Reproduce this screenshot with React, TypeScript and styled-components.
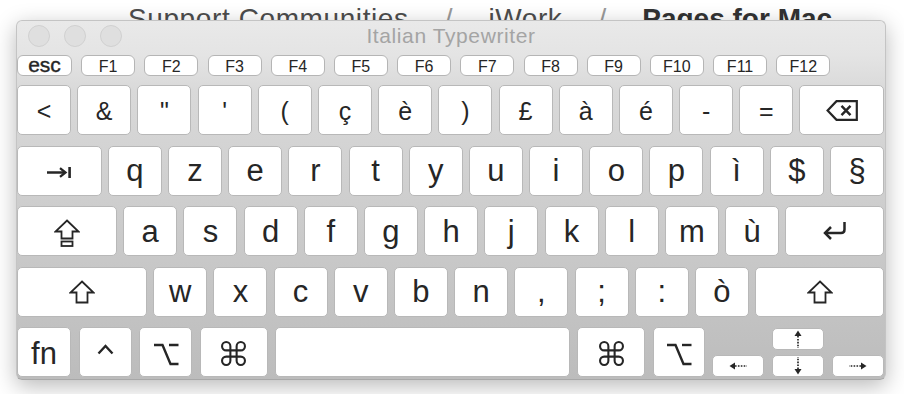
import React from "react";
import styled, { createGlobalStyle } from "styled-components";

const ink = "#262626";

const row1 = ["<", "&", "\"", "'", "(", "ç", "è", ")", "£", "à", "é", "-", "="];
const row2 = ["q", "z", "e", "r", "t", "y", "u", "i", "o", "p", "ì", "$", "§"];
const row3 = ["a", "s", "d", "f", "g", "h", "j", "k", "l", "m", "ù"];
const row4 = ["w", "x", "c", "v", "b", "n", ",", ";", ":", "ò"];
const fkeys = ["F1", "F2", "F3", "F4", "F5", "F6", "F7", "F8", "F9", "F10", "F11", "F12"];

const TabIcon = () => (
    <svg width="26" height="13" viewBox="0 0 26 13">
        <path d="M1 6.5H18.5" stroke={ink} strokeWidth="2.3" />
        <path d="M14 2.2L19.5 6.5L14 10.8" fill="none" stroke={ink} strokeWidth="2.3" />
        <rect x="22.3" y="1" width="2.6" height="11" fill={ink} />
    </svg>
);

const CapsIcon = () => (
    <svg width="26" height="28" viewBox="0 0 26 28">
        <path d="M13 1.5L24.5 12.5H18.5V19.5H7.5V12.5H1.5Z" fill="none" stroke={ink} strokeWidth="1.8" />
        <rect x="7.5" y="22.5" width="11" height="4.5" fill="none" stroke={ink} strokeWidth="1.8" />
    </svg>
);

const ShiftIcon = () => (
    <svg width="26" height="24" viewBox="0 0 26 24">
        <path d="M13 1.5L24.5 12.5H18.5V22.5H7.5V12.5H1.5Z" fill="none" stroke={ink} strokeWidth="1.8" />
    </svg>
);

const ReturnIcon = () => (
    <svg width="27" height="19" viewBox="0 0 27 19">
        <path d="M23.5 1V8.5Q23.5 12 20 12H4.5" fill="none" stroke={ink} strokeWidth="2.5" />
        <path d="M10 6L4 12L10 18" fill="none" stroke={ink} strokeWidth="2.5" />
    </svg>
);

const DeleteIcon = () => (
    <svg width="32" height="21" viewBox="0 0 32 21">
        <path d="M10.5 1.2H30.8V19.8H10.5L1.6 10.5Z" fill="none" stroke={ink} strokeWidth="2.2" />
        <path d="M15.5 5.8L24.5 15.2M24.5 5.8L15.5 15.2" stroke={ink} strokeWidth="2.4" />
    </svg>
);

const CtrlIcon = () => (
    <svg width="17" height="11" viewBox="0 0 17 11">
        <path d="M1.5 9.5L8.5 2L15.5 9.5" fill="none" stroke={ink} strokeWidth="2.4" />
    </svg>
);

const OptionIcon = () => (
    <svg width="26" height="23" viewBox="0 0 26 23">
        <path d="M1 2H9.5L17.5 21H25.5" fill="none" stroke={ink} strokeWidth="2.4" />
        <path d="M16 2H25.5" stroke={ink} strokeWidth="2.4" />
    </svg>
);

const CmdIcon = () => (
    <svg width="25" height="25" viewBox="0 0 24 24">
        <path
            d="M15 5V19A4 4 0 1 0 19 15H5A4 4 0 1 0 9 19V5A4 4 0 1 0 5 9H19A4 4 0 1 0 15 5"
            fill="none"
            stroke={ink}
            strokeWidth="2"
        />
    </svg>
);

const DashArrow = ({ dir }: { dir: "up" | "down" | "left" | "right" }) => {
    const rot = { up: 0, right: 90, down: 180, left: 270 }[dir];
    return (
        <svg width="18" height="18" viewBox="0 0 18 18" style={{ transform: `rotate(${rot}deg)` }}>
            <path d="M9 0.5L12.5 6H5.5Z" fill={ink} />
            <path d="M9 6V18" stroke={ink} strokeWidth="1.7" strokeDasharray="1.6 1.3" />
        </svg>
    );
};

const App = () => {
    return (
        <>
            <GlobalStyle />
            <Page>
                <Crumbs>
                    <Crumb>Support Communities</Crumb>
                    <Sep>/</Sep>
                    <Crumb>iWork</Crumb>
                    <Sep>/</Sep>
                    <Crumb $bold>Pages for Mac</Crumb>
                </Crumbs>

                <Window>
                    <TitleBar>
                        <Lights>
                            <Light />
                            <Light />
                            <Light />
                        </Lights>
                        <Title>Italian Typewriter</Title>
                        <div />
                    </TitleBar>

                    <Keyboard>
                        <FnRow>
                            <FnKey $w={55} $esc>esc</FnKey>
                            {fkeys.map((f) => (
                                <FnKey key={f} $w={54}>{f}</FnKey>
                            ))}
                        </FnRow>

                        <Row $gap={6.2}>
                            {row1.map((c) => (
                                <Key key={c} $w={54} $size={25} $nudge={1.5}>{c}</Key>
                            ))}
                            <Key><DeleteIcon /></Key>
                        </Row>

                        <Row $gap={6.2}>
                            <Key $nudge={2}><TabIcon /></Key>
                            {row2.map((c) => (
                                <Key key={c} $w={54}>{c}</Key>
                            ))}
                        </Row>

                        <Row $gap={6.2}>
                            <Key $w={100} $nudge={2}><CapsIcon /></Key>
                            {row3.map((c) => (
                                <Key key={c} $w={54}>{c}</Key>
                            ))}
                            <Key $nudge={-0.5}><ReturnIcon /></Key>
                        </Row>

                        <Row $gap={6.2}>
                            <Key $w={130}><ShiftIcon /></Key>
                            {row4.map((c) => (
                                <Key key={c} $w={54}>{c}</Key>
                            ))}
                            <Key><ShiftIcon /></Key>
                        </Row>

                        <Row $gap={7.5}>
                            <Key $w={54} $nudge={1.5}>fn</Key>
                            <Key $w={53} $nudge={-3}><CtrlIcon /></Key>
                            <Key $w={53} $nudge={2}><OptionIcon /></Key>
                            <Key $w={68} $nudge={1}><CmdIcon /></Key>
                            <Key />
                            <Key $w={68} $nudge={1}><CmdIcon /></Key>
                            <Key $w={52} $nudge={2}><OptionIcon /></Key>
                            <Arrows>
                                <ArrowKey $col={2} $row={1}><DashArrow dir="up" /></ArrowKey>
                                <ArrowKey $col={1} $row={2}><DashArrow dir="left" /></ArrowKey>
                                <ArrowKey $col={2} $row={2}><DashArrow dir="down" /></ArrowKey>
                                <ArrowKey $col={3} $row={2}><DashArrow dir="right" /></ArrowKey>
                            </Arrows>
                        </Row>
                    </Keyboard>
                </Window>
            </Page>
        </>
    );
};

export default App;

const GlobalStyle = createGlobalStyle`
html, body {
    margin: 0;
    padding: 0;
    background: #fff;
    overflow: hidden;
}
body {
    font-family: "Liberation Sans", "DejaVu Sans", Arial, sans-serif;
}
`;

const Page = styled.div`
position: relative;
width: 904px;
height: 394px;
`;

// only the top strip of the page header shows above the viewer window
const Crumbs = styled.div`
display: flex;
align-items: baseline;
height: 20px;
overflow: hidden;
padding: 3px 0 0 128px;
box-sizing: border-box;
font-size: 28px;
line-height: 32px;
white-space: nowrap;
`;

const Crumb = styled.span<{ $bold?: boolean }>`
font-weight: ${(p) => (p.$bold ? 700 : 400)};
color: ${(p) => (p.$bold ? "#333" : "#4d4d4d")};
letter-spacing: ${(p) => (p.$bold ? 0 : 0.6)}px;
`;

const Sep = styled.span`
color: #9a9a9a;
margin: 0 36px;
`;

const Window = styled.div`
position: absolute;
left: 16px;
top: 20px;
width: 870px;
height: 360px;
box-sizing: border-box;
border: 1px solid #c4c4c4;
border-bottom-color: #a8a8a8;
border-radius: 6px;
background: linear-gradient(to bottom, #e9e9e9 0px, #e4e4e4 34px, #d9d9d9 70px, #bcbcbc 100%);
box-shadow: 0 6px 22px rgba(0, 0, 0, 0.28);
display: flex;
flex-direction: column;
overflow: hidden;
`;

const TitleBar = styled.div`
height: 34px;
flex: 0 0 34px;
box-sizing: border-box;
padding-top: 4px;
display: grid;
grid-template-columns: 1fr auto 1fr;
align-items: start;
`;

const Lights = styled.div`
display: flex;
gap: 14px;
padding-left: 11px;
`;

const Light = styled.div`
width: 22px;
height: 22px;
box-sizing: border-box;
border-radius: 50%;
background: #dfdfdf;
border: 1px solid #d0d0d0;
`;

const Title = styled.div`
font-size: 21px;
line-height: 22px;
color: #a4a4a4;
letter-spacing: 0.6px;
`;

const Keyboard = styled.div`
display: flex;
flex-direction: column;
gap: 10.5px;
padding-right: 1px;
`;

const FnRow = styled.div`
display: flex;
gap: 9.2px;
height: 21px;
margin-bottom: -1.5px;
`;

const FnKey = styled.div<{ $w: number; $esc?: boolean }>`
flex: 0 0 ${(p) => p.$w}px;
box-sizing: border-box;
height: 100%;
display: flex;
align-items: center;
justify-content: center;
padding: ${(p) => (p.$esc ? "0 0 3px" : "3px 0 0")};
background: #fff;
border: 1px solid #b5b5b5;
border-radius: 6px;
color: ${ink};
font-size: ${(p) => (p.$esc ? 21 : 16)}px;
-webkit-text-stroke: ${(p) => (p.$esc ? 0.4 : 0)}px ${ink};
line-height: 1;
`;

const Row = styled.div<{ $gap: number }>`
display: flex;
gap: ${(p) => p.$gap}px;
height: 50px;
`;

const Key = styled.div<{ $w?: number; $size?: number; $nudge?: number }>`
flex: ${(p) => (p.$w ? `0 0 ${p.$w}px` : "1 1 0")};
box-sizing: border-box;
height: 100%;
display: flex;
align-items: center;
justify-content: center;
padding: ${(p) => {
    const n = p.$nudge ?? 0;
    return n >= 0 ? `${n * 2}px 0 0` : `0 0 ${-n * 2}px`;
}};
background: #fff;
border: 1px solid #b8b8b8;
border-radius: 5px;
color: ${ink};
font-size: ${(p) => p.$size ?? 31}px;
line-height: 1;
`;

const Arrows = styled.div`
flex: 0 0 172px;
align-self: flex-end;
display: grid;
grid-template-columns: repeat(3, 52px);
grid-template-rows: 22px 22px;
column-gap: 8px;
row-gap: 5px;
`;

const ArrowKey = styled.div<{ $col: number; $row: number }>`
grid-column: ${(p) => p.$col};
grid-row: ${(p) => p.$row};
box-sizing: border-box;
display: flex;
align-items: center;
justify-content: center;
background: #fff;
border: 1px solid #b8b8b8;
border-radius: 5px;
`;
